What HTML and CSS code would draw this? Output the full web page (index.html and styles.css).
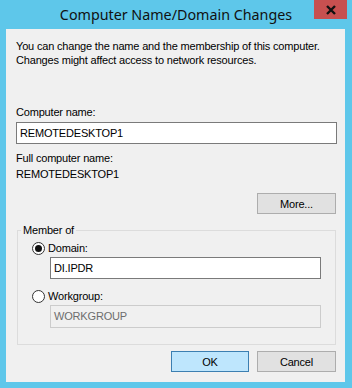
FILE: index.html
```html
<!DOCTYPE html>
<html>
<head>
<meta charset="utf-8">
<link rel="stylesheet" href="styles.css">
</head>
<body>
<div class="window">
  <div class="titlebar">
    <span class="title">Computer Name/Domain Changes</span>
    <div class="close">
      <svg width="12" height="10" viewBox="0 0 12 10"><path d="M2 1 L10 9 M10 1 L2 9" stroke="#111" stroke-width="2.4" fill="none"/></svg>
    </div>
  </div>
  <div class="client">
    <p class="intro">You can change the name and the membership of this computer.<br>Changes might affect access to network resources.</p>
    <div class="label first">Computer name:</div>
    <div class="input wide">REMOTEDESKTOP1</div>
    <div class="label full">Full computer name:</div>
    <div class="label fullname">REMOTEDESKTOP1</div>
    <div class="row more-row"><div class="btn">More...</div></div>
    <fieldset class="group">
      <legend>Member of</legend>
      <div class="radio-row domain"><span class="radio checked"></span><span>Domain:</span></div>
      <div class="input inner">DI.IPDR</div>
      <div class="radio-row workgroup"><span class="radio"></span><span>Workgroup:</span></div>
      <div class="input inner disabled">WORKGROUP</div>
    </fieldset>
    <div class="row actions"><div class="btn ok">OK</div><div class="btn">Cancel</div></div>
  </div>
</div>
</body>
</html>
```
FILE: styles.css
```css
html, body { margin: 0; padding: 0; }
body { width: 352px; height: 388px; overflow: hidden; font-family: "Liberation Sans", Arial, sans-serif; font-size: 11px; color: #000; }
.window { width: 352px; height: 388px; background: #5ec7ea; display: flex; flex-direction: column; box-sizing: border-box; }
.titlebar { height: 29px; position: relative; display: flex; justify-content: center; flex: none; }
.title { font-family: "Noto Sans", "Open Sans", sans-serif; font-size: 14.3px; line-height: 29px; color: #111; }
.close { position: absolute; top: 0; left: 314px; width: 33px; height: 19px; background: #c75050; display: flex; align-items: center; justify-content: center; }
.client { flex: 1; margin: 0 7px 6px 6px; background: #f0f0f0; padding: 10px 8px 0 10px; line-height: 14px; letter-spacing: -0.18px; }
.intro { margin: 0; }
.label { height: 14px; }
.label.first { margin-top: 38px; }
.label.full { margin-top: 7px; }
.label.fullname { margin-top: 2px; }
.input { height: 22px; box-sizing: border-box; border: 1px solid #7a7a7a; background: #fff; padding: 0 3px; line-height: 20px; font-size: 11px; }
.input.wide { margin-top: 3px; width: 321px; }
.row { display: flex; justify-content: flex-end; gap: 8px; padding-right: 1px; }
.more-row { margin-top: 12px; }
.btn { width: 79px; height: 21px; box-sizing: border-box; border: 1px solid #adadad; background: #e1e1e1; display: flex; align-items: center; justify-content: center; }
.btn.ok { background: #bee6fd; border-color: #3c7fb1; width: 78px; }
.group { margin: 9px 0 0 1px; width: 319px; height: 122px; box-sizing: border-box; border: 1px solid #dcdcdc; padding: 0 0 0 3px; }
.group legend { padding: 0 2px; line-height: 14px; }
.radio-row { display: flex; align-items: center; gap: 3px; margin-left: 11px; height: 14px; }
.radio-row.domain { margin-top: 4px; }
.radio-row.workgroup { margin-top: 10px; }
.radio { width: 13px; height: 13px; box-sizing: border-box; border: 1px solid #333; border-radius: 50%; background: #fff; position: relative; flex: none; }
.radio.checked::after { content: ""; position: absolute; left: 2px; top: 2px; width: 7px; height: 7px; border-radius: 50%; background: #111; }
.input.inner { margin: 2px 0 0 29px; width: 271px; }
.input.disabled { background: #f0f0f0; border-color: #cccccc; color: #6d6d6d; height: 23px; }
.actions { margin-top: 6px; }
```
